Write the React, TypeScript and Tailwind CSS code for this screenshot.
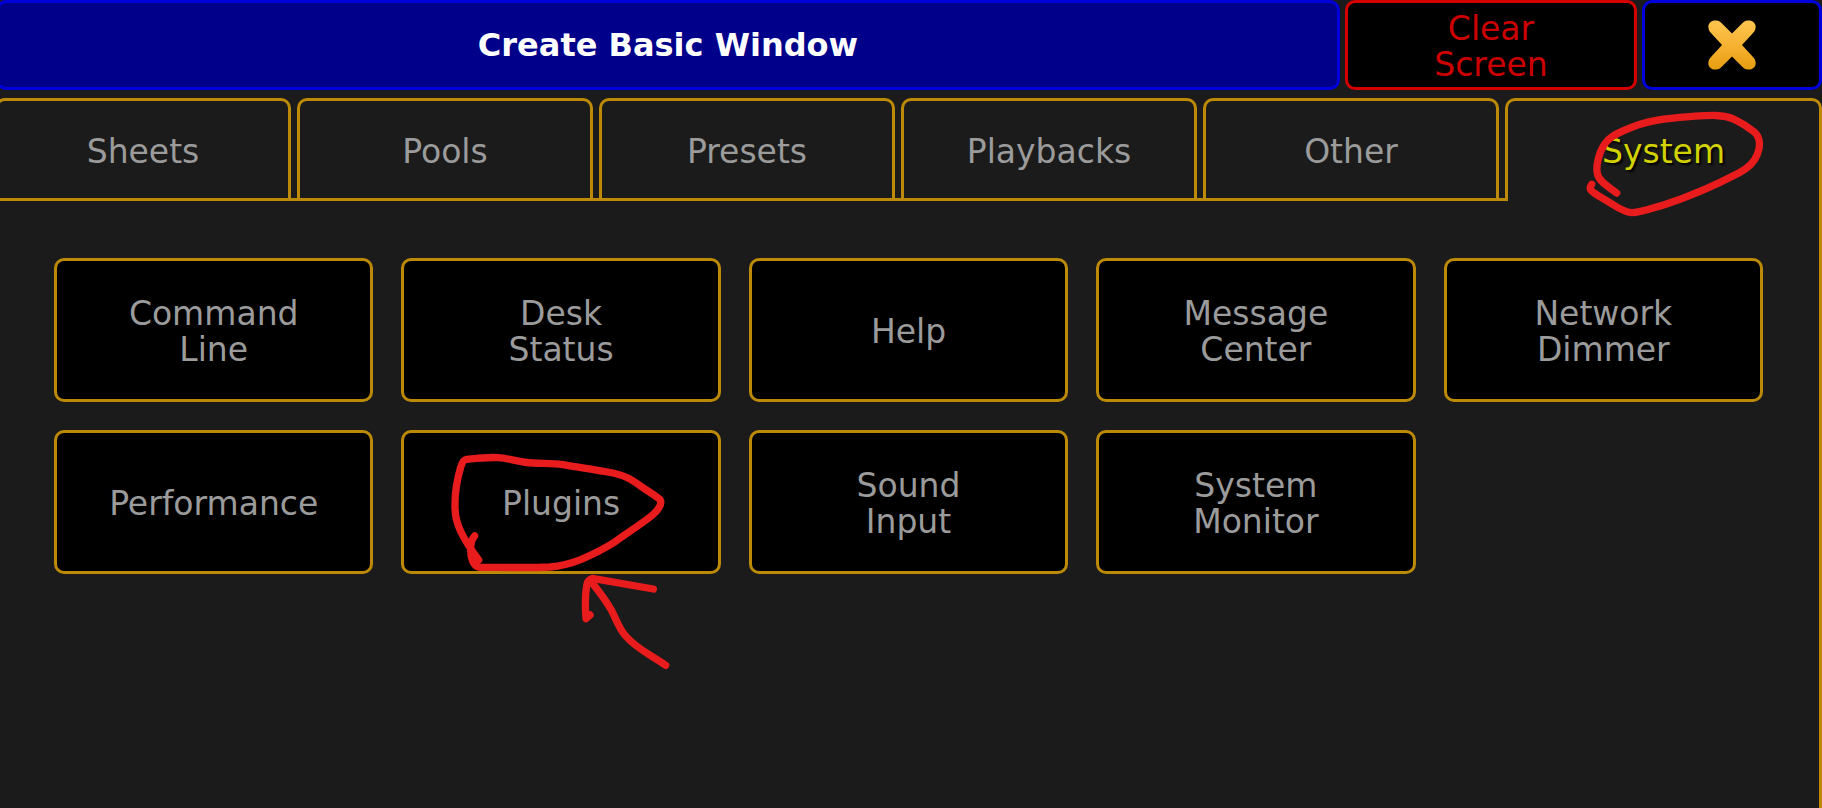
import { useState } from "react";

const tabs = ["Sheets", "Pools", "Presets", "Playbacks", "Other"];

const windows = [
  ["Command", "Line"],
  ["Desk", "Status"],
  ["Help"],
  ["Message", "Center"],
  ["Network", "Dimmer"],
  ["Performance"],
  ["Plugins"],
  ["Sound", "Input"],
  ["System", "Monitor"],
];

function CloseIcon() {
  return (
    <svg viewBox="0 0 48 50" className="h-[50px] w-12" aria-hidden="true">
      <defs>
        <linearGradient id="close-gold" gradientUnits="userSpaceOnUse" x1="0" y1="0" x2="0" y2="50">
          <stop offset="0" stopColor="#ffc650" />
          <stop offset="0.5" stopColor="#f6b232" />
          <stop offset="1" stopColor="#e69d10" />
        </linearGradient>
      </defs>
      <path
        d="M0.500 8C-0.500 4 3 0.500 7 0.500H8.500C10.500 0.500 12 1.500 13.500 3L24 13.500 34.500 3C36 1.500 37.500 0.500 39.500 0.500H41C45 0.500 48.500 4 47.500 8C47.300 10 46.500 11.500 45 13L34 25 45 37C46.500 38.500 47.300 40 47.500 42C48.500 46 45 49.500 41 49.500H39.500C37.500 49.500 36 48.500 34.500 47L24 36.500 13.500 47C12 48.500 10.500 49.500 8.500 49.500H7C3 49.500 -0.500 46 0.500 42C0.700 40 1.500 38.500 3 37L14 25 3 13C1.500 11.500 0.700 10 0.500 8Z"
        fill="url(#close-gold)"
      />
    </svg>
  );
}

function SystemMark() {
  return (
    <svg
      viewBox="9 4 600 360"
      className="pointer-events-none absolute top-1/2 left-1/2 z-10 h-[120px] w-[200px] -translate-x-1/2 -translate-y-1/2 overflow-visible"
      fill="none"
      stroke="#e81c1c"
      strokeWidth="22"
      strokeLinecap="round"
      strokeLinejoin="round"
      aria-hidden="true"
    >
      <path d="M167 310C148 294 118 280 110 256C103 232 113 190 131 163C147 140 169 132 195 120C260 89 330 85 395 80C440 77 485 73 520 89C545 101 562 112 580 127C600 145 598 174 589 194C580 219 560 236 535 249C470 283 390 319 310 345C270 357 235 370 212 369C185 367 165 350 140 335C120 323 100 313 90 302C86 297 87 291 92 284" />
    </svg>
  );
}

function PluginsMark() {
  return (
    <svg
      viewBox="64 -112 720 720"
      className="pointer-events-none absolute top-1/2 left-1/2 z-10 size-60 -translate-x-1/2 -translate-y-1/2 overflow-visible"
      fill="none"
      stroke="#e81c1c"
      strokeWidth="22"
      strokeLinecap="round"
      strokeLinejoin="round"
      aria-hidden="true"
    >
      <path d="M177 422C155 392 140 372 124 338C110 310 106 292 106 262C105 220 114 175 123 144C127 131 131 121 140 120C170 117 205 113 235 115C275 118 300 129 340 131C375 133 395 131 430 136C490 146 535 152 580 161C625 171 640 185 670 205C690 219 710 230 721 241C730 254 712 276 695 290C660 318 620 342 585 368C550 391 515 407 485 420C455 432 425 440 390 443C330 446 240 444 182 444C160 443 153 415 153 392C153 370 156 358 165 350" />
      <path d="M511 587 499 598C496 560 497 520 502 494C504 484 510 480 518 477L701 509" />
      <path d="M512 484C535 512 555 538 575 572C590 600 598 628 618 650C650 688 695 708 738 738" />
    </svg>
  );
}

export default function App() {
  const [activeWindow, setActiveWindow] = useState("Plugins");

  return (
    <main className="flex min-h-screen flex-col overflow-hidden bg-[#1b1b1b] font-['DejaVu_Sans',Verdana,sans-serif] text-[33px] leading-9 text-[#9b9b9b]">
      <header className="-ml-1 grid grid-cols-[minmax(0,1fr)_292px_180px] gap-[5px]">
        <h1 className="flex h-[90px] items-center justify-center rounded-[10px] border-3 border-[#0000dc] bg-[#00008b] text-[32px] font-bold text-white">
          Create Basic Window
        </h1>
        <button
          type="button"
          className="flex flex-col items-center justify-center rounded-[10px] border-3 border-[#d40000] bg-black pt-1 text-[#cc0000]"
        >
          <span>Clear</span>
          <span>Screen</span>
        </button>
        <button
          type="button"
          aria-label="Close"
          className="flex items-center justify-center rounded-[10px] border-3 border-[#0000dc] bg-black"
        >
          <CloseIcon />
        </button>
      </header>

      <div role="tablist" className="mt-2 -ml-[5px] grid grid-cols-[minmax(0,1510fr)_minmax(0,317fr)]">
        <div className="grid h-[103px] grid-cols-5 gap-[6px] border-b-3 border-[#bd8a08] pr-[6px]">
          {tabs.map((tab) => (
            <button
              key={tab}
              type="button"
              role="tab"
              aria-selected="false"
              className="rounded-t-[10px] border-x-3 border-t-3 border-[#bd8a08] pt-1"
            >
              {tab}
            </button>
          ))}
        </div>
        <button
          type="button"
          role="tab"
          aria-selected="true"
          className="relative rounded-t-[10px] border-x-3 border-t-3 border-[#bd8a08] pt-0.5 text-[#d2d200] [text-shadow:2px_2px_2px_#000]"
        >
          System
          <SystemMark />
        </button>
      </div>

      <section
        role="tabpanel"
        aria-label="System"
        className="grid flex-1 grid-cols-5 content-start gap-7 border-r-3 border-[#bd8a08] pt-[57px] pr-14 pb-14 pl-[54px]"
      >
        {windows.map((lines) => {
          const name = lines.join(" ");
          return (
            <button
              key={name}
              type="button"
              aria-pressed={activeWindow === name}
              onClick={() => setActiveWindow(name)}
              className="relative flex h-36 flex-col items-center justify-center rounded-[10px] border-3 border-[#bd8a08] bg-black pt-1"
            >
              {lines.map((line) => (
                <span key={line}>{line}</span>
              ))}
              {name === "Plugins" && <PluginsMark />}
            </button>
          );
        })}
      </section>
    </main>
  );
}
